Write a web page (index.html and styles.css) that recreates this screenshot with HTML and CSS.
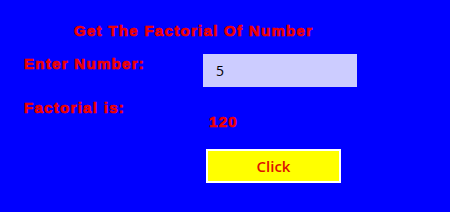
FILE: index.html
```html
<!DOCTYPE html>
<html lang="en">
<head>
  <meta charset="UTF-8">
  <meta name="viewport" content="width=device-width, initial-scale=1.0">
  <title>Factorial</title>
  <link rel="stylesheet" href="styles.css">
</head>
<body>
  <div class="page">
    <h1 class="title">Get The Factorial Of Number</h1>
    <div class="form">
      <div class="label">Enter Number:</div>
      <div class="field"><input type="text" class="number" id="numberInput" value="5"></div>

      <div class="label result-label">Factorial is:</div>
      <div class="field"><span class="result" id="result">120</span></div>

      <div></div>
      <div class="field"><button class="btn" onclick="calc()">Click</button></div>
    </div>
  </div>

  <script>
    // Calcular el factorial
    function calc() {
      const n = parseInt(document.getElementById('numberInput').value, 10);
      let f = 1;
      for (let i = 2; i <= n; i++) f *= i;
      document.getElementById('result').textContent = isNaN(n) ? '' : f;
    }
  </script>
</body>
</html>
```

FILE: styles.css
```css
body, html {
  margin: 0;
  height: 100%;
  background-color: #0000ff;
  font-family: "Liberation Sans", Arial, sans-serif;
}

.page {
  padding: 21px 0 0 24px;
}

.title, .label, .result {
  font-size: 15px;
  font-weight: bold;
  color: #ee0000;
  letter-spacing: 1.3px;
  -webkit-text-stroke: 0.7px #ee0000;
}

.title {
  margin: 0 0 0 50px;
  height: 20px;
  line-height: 20px;
}

.form {
  display: grid;
  grid-template-columns: 179px 160px;
  margin-top: 13px;
}

.label {
  padding-top: 1px;
}

.number {
  box-sizing: border-box;
  width: 154px;
  height: 33px;
  border: none;
  margin: 0;
  padding: 0 0 0 13px;
  background-color: #ccccff;
  font-family: "Open Sans", sans-serif;
  font-size: 14px;
  color: #000;
  outline: none;
}

.result-label {
  padding-top: 12px;
}

.result {
  display: block;
  padding: 26px 0 0 6px;
}

.btn {
  box-sizing: border-box;
  margin: 19px 0 0 3px;
  width: 135px;
  height: 34px;
  border: 2px solid #ffffff;
  background-color: #ffff00;
  color: #dd1100;
  font-family: "Open Sans", sans-serif;
  font-size: 15px;
  font-weight: 600;
  cursor: pointer;
}
```
